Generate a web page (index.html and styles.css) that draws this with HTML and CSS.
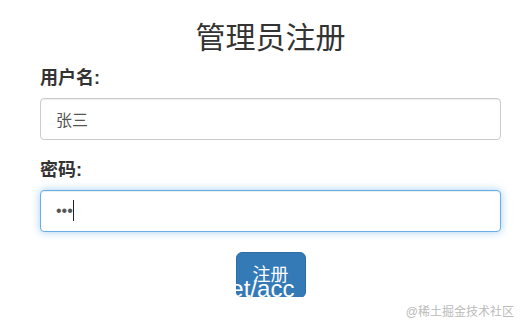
FILE: index.html
```html
<!DOCTYPE html>
<html lang="zh-CN">
<head>
    <meta charset="UTF-8">
    <meta name="viewport" content="width=device-width, initial-scale=1.0">
    <title>管理员注册</title>
    <link rel="stylesheet" href="styles.css">
</head>
<body>
    <div class="container">
        <h1>管理员注册</h1>

        <label for="username">用户名:</label>
        <input type="text" id="username" value="张三" />

        <label for="password">密码:</label>
        <div class="pwd-wrapper">
            <input type="password" id="password" class="focused" value="123" />
            <span class="caret"></span>
        </div>

        <div class="actions">
            <button>注册</button>
            <span class="mark">net/acc</span>
        </div>
    </div>
    <span class="credit">@稀土掘金技术社区</span>
</body>
</html>
```

FILE: styles.css
```css
body {
    margin: 0;
    font-family: "Liberation Sans", "Noto Sans CJK SC", sans-serif;
    color: #333;
    background: #fff;
}
.container {
    padding: 0 23px 0 40px;
}
h1 {
    margin: 20px 0 11px;
    font-size: 30px;
    font-weight: normal;
    line-height: 36px;
    text-align: center;
}
label {
    display: block;
    font-size: 18px;
    font-weight: bold;
    line-height: 22px;
    margin-bottom: 9px;
}
input {
    display: block;
    box-sizing: border-box;
    width: 100%;
    height: 42px;
    padding: 0 15px;
    margin-bottom: 19px;
    border: 1px solid #ccc;
    border-radius: 4px;
    font-family: inherit;
    font-size: 16px;
    color: #555;
    outline: none;
    box-shadow: inset 0 1px 1px rgba(0, 0, 0, .075);
}
.pwd-wrapper {
    position: relative;
}
.pwd-wrapper input {
    margin-bottom: 20px;
}
input.focused {
    border-color: #66afe9;
    box-shadow: inset 0 1px 1px rgba(0, 0, 0, .075), 0 0 8px rgba(102, 175, 233, .6);
}
.caret {
    position: absolute;
    left: 33px;
    top: 10px;
    width: 1px;
    height: 21px;
    background: #222;
}
.actions {
    position: relative;
    text-align: center;
    overflow: hidden;
    height: 45px;
}
button {
    padding: 10px 16px;
    font-family: inherit;
    font-size: 18px;
    line-height: 24px;
    color: #fff;
    background-color: #337ab7;
    border: 1px solid #2e6da4;
    border-radius: 6px;
    cursor: pointer;
}
.mark {
    position: absolute;
    left: 177px;
    top: 25px;
    font-size: 24px;
    line-height: 24px;
    color: #fff;
    white-space: nowrap;
}
.credit {
    position: absolute;
    right: 10px;
    top: 302px;
    font-size: 12px;
    color: #bbb;
}
```
